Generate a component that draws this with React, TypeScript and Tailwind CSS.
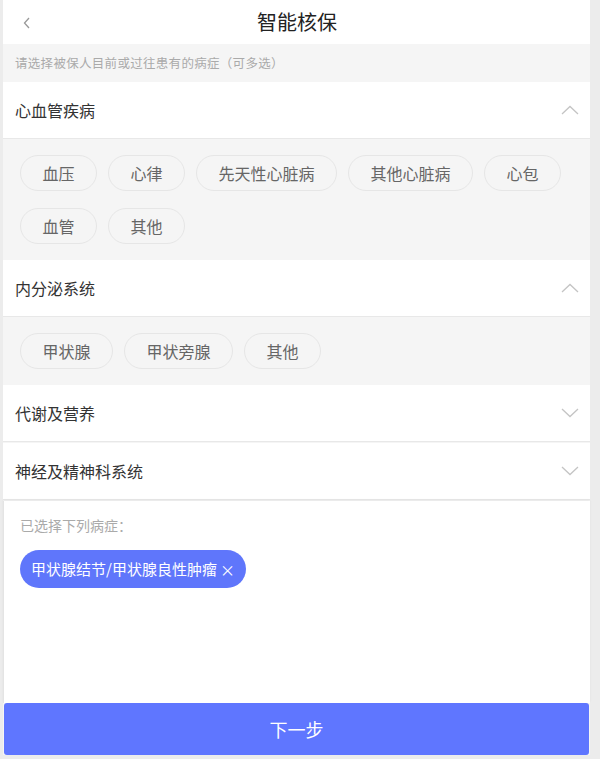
import { useState } from "react";

const font = { fontFamily: '"Noto Sans CJK SC", "Liberation Sans", sans-serif' };

type Group = { title: string; open: boolean; items: string[] };

const groups: Group[] = [
  { title: "心血管疾病", open: true, items: ["血压", "心律", "先天性心脏病", "其他心脏病", "心包", "血管", "其他"] },
  { title: "内分泌系统", open: true, items: ["甲状腺", "甲状旁腺", "其他"] },
  { title: "代谢及营养", open: false, items: [] },
  { title: "神经及精神科系统", open: false, items: [] },
];

function Chevron({ up }: { up: boolean }) {
  return (
    <svg width="18" height="10" viewBox="0 0 18 10" fill="none" className="text-[#c4c4c4]">
      <path d={up ? "M1 9 L9 1.5 L17 9" : "M1 1 L9 8.5 L17 1"} stroke="currentColor" strokeWidth="1.3" />
    </svg>
  );
}

export default function App() {
  const [selected, setSelected] = useState(["甲状腺结节/甲状腺良性肿瘤"]);

  return (
    <div className="h-[759px] bg-[#ececec] overflow-hidden" style={font}>
      <div className="ml-[3px] w-[587px] h-[755px] flex flex-col bg-[#f5f5f5]">
        <div className="h-[44px] shrink-0 bg-white flex items-center relative">
          <svg width="8" height="12" viewBox="0 0 8 12" fill="none" className="absolute left-[20px] top-[17px] text-[#999]">
            <path d="M6 1 L1.5 6 L6 11" stroke="currentColor" strokeWidth="1.3" />
          </svg>
          <h1 className="w-full text-center text-[20px] text-[#222] pl-[1px]">智能核保</h1>
        </div>
        <div className="h-[38px] shrink-0 flex items-center px-[12px] text-[12.5px] tracking-[0.3px] text-[#aaa]">
          请选择被保人目前或过往患有的病症（可多选）
        </div>

        {groups.map((g) => (
          <div key={g.title}>
            <div className="h-[57px] bg-white border-b border-[#e8e8e8] flex items-center justify-between pl-[12px] pr-[11px] mb-[1px]">
              <span className="text-[16px] text-[#333]">{g.title}</span>
              <Chevron up={g.open} />
            </div>
            {g.open && (
              <div className="flex flex-wrap gap-x-[11px] gap-y-[17px] px-[17px] pt-[15px] pb-[16px]">
                {g.items.map((t, i) => (
                  <span
                    key={i}
                    className="h-[36px] px-[21.5px] flex items-center rounded-full border border-[#e6e6e6] bg-[#f5f5f5] text-[16px] text-[#666]"
                  >
                    {t}
                  </span>
                ))}
              </div>
            )}
          </div>
        ))}

        <div className="flex-1 bg-white border-l border-[#e4e4e4] shadow-[0_-1px_2px_rgba(0,0,0,0.06)] px-[16px] pt-[14px]">
          <p className="text-[14px] text-[#aaa]">已选择下列病症：</p>
          <div className="flex flex-wrap gap-2 mt-[14px]">
            {selected.map((s) => (
              <span
                key={s}
                className="h-[38px] px-[11px] flex items-center rounded-full bg-[#5f76fb] text-white text-[15px]"
              >
                {s}
                <button
                  className="ml-[3px] text-[15px] leading-none"
                  onClick={() => setSelected(selected.filter((x) => x !== s))}
                >
                  ×
                </button>
              </span>
            ))}
          </div>
        </div>

        <button className="h-[52px] shrink-0 w-[585px] ml-[1px] rounded-[3px] bg-[#5f76ff] text-white text-[18px]">
          下一步
        </button>
      </div>
    </div>
  );
}
